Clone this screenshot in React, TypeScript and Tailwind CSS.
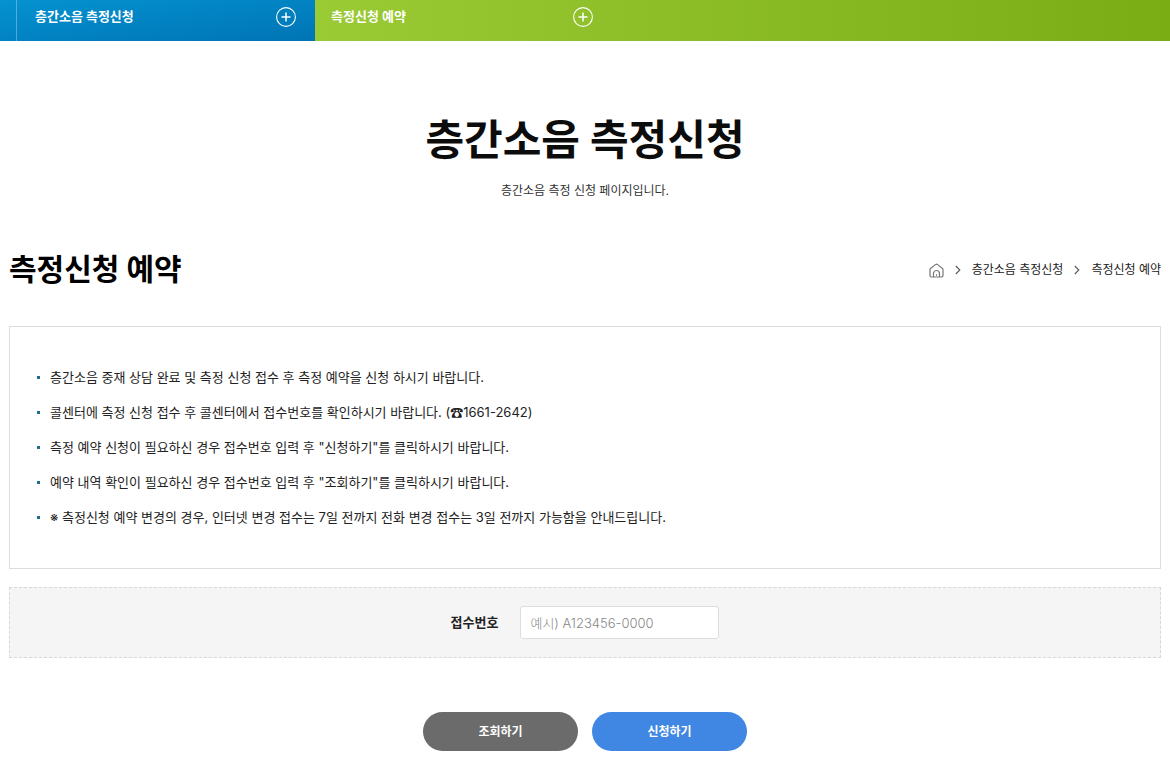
import { useState } from "react";
import type { FormEvent } from "react";

const notices = [
    "층간소음 중재 상담 완료 및 측정 신청 접수 후 측정 예약을 신청 하시기 바랍니다.",
    "콜센터에 측정 신청 접수 후 콜센터에서 접수번호를 확인하시기 바랍니다. (☎1661-2642)",
    "측정 예약 신청이 필요하신 경우 접수번호 입력 후 \"신청하기\"를 클릭하시기 바랍니다.",
    "예약 내역 확인이 필요하신 경우 접수번호 입력 후 \"조회하기\"를 클릭하시기 바랍니다.",
    "※ 측정신청 예약 변경의 경우, 인터넷 변경 접수는 7일 전까지 전화 변경 접수는 3일 전까지 가능함을 안내드립니다.",
];

function PlusCircle() {
    return (
        <svg width="20" height="20" viewBox="0 0 20 20" fill="none" stroke="currentColor" aria-hidden="true">
            <circle cx="10" cy="10" r="9.4" strokeWidth="1.1" />
            <path d="M10 5.5v9M5.5 10h9" strokeWidth="1.5" />
        </svg>
    );
}

function HomeIcon() {
    return (
        <svg width="15" height="15" viewBox="0 0 15 15" fill="none" stroke="#777" strokeWidth="1.2" strokeLinejoin="round" aria-hidden="true">
            <path d="M1 6.6q0-.7.5-1.1l5.2-4.1q.8-.6 1.6 0l5.200 4.100q.5.4.5 1.100v6q0 1.400-1.400 1.400H2.400Q1 14 1 12.600z" />
            <path d="M4.500 14v-3.500a3 3 0 0 1 6 0V14" />
            <path d="M7.500 11v2" strokeWidth=".8" />
        </svg>
    );
}

function Chevron() {
    return (
        <svg width="6" height="10" viewBox="0 0 6 10" fill="none" stroke="#555" strokeWidth="1.1" aria-hidden="true">
            <path d="M.8 1l4 4-4 4" />
        </svg>
    );
}

function TopNav() {
    return (
        <nav className="flex text-[13px] font-bold text-white">
            <div className="flex w-[315px] shrink-0 bg-linear-to-br from-[#0592d0] to-[#0074b5] pl-4">
                <button type="button" className="flex flex-1 items-center justify-between border-l border-white/30 pt-[7px] pr-[19px] pb-[14px] pl-[18px]">
                    층간소음 측정신청
                    <PlusCircle />
                </button>
            </div>
            <div className="flex-1 bg-linear-to-r from-[#9aca34] to-[#7aad14]">
                <button type="button" className="flex w-[297px] items-center justify-between pt-[7px] pr-[19px] pb-[14px] pl-4">
                    측정신청 예약
                    <PlusCircle />
                </button>
            </div>
        </nav>
    );
}

function Breadcrumb() {
    return (
        <nav aria-label="breadcrumb" className="flex items-center gap-[11px] pt-[2px] text-xs text-[#222]">
            <a href="#" aria-label="홈">
                <HomeIcon />
            </a>
            <Chevron />
            <a href="#">층간소음 측정신청</a>
            <Chevron />
            <a href="#">측정신청 예약</a>
        </nav>
    );
}

export default function App() {
    const [receiptNo, setReceiptNo] = useState("");

    const handleSubmit = (e: FormEvent) => {
        e.preventDefault();
    };

    return (
        <div className="bg-white font-['Inter','Noto_Sans_CJK_KR',sans-serif] text-[#222]">
            <TopNav />

            <main className="px-[9px] pb-[9px]">
                <header className="pt-[69px] text-center">
                    <h1 className="text-[42px] leading-[60px] font-bold text-[#0c0c0c]">층간소음 측정신청</h1>
                    <p className="mt-3 text-xs leading-[18px] text-[#333]">층간소음 측정 신청 페이지입니다.</p>
                </header>

                <div className="mt-[49px] flex items-center justify-between">
                    <h2 className="text-[30px] leading-10 font-bold text-black">측정신청 예약</h2>
                    <Breadcrumb />
                </div>

                <ul className="mt-[37px] border border-[#ddd] px-[27px] py-[33px] text-[13px] leading-[35px]">
                    {notices.map((text) => (
                        <li key={text} className="flex items-center gap-[10px]">
                            <span className="size-[3px] shrink-0 bg-[#1c6f8c]" />
                            {text}
                        </li>
                    ))}
                </ul>

                <form onSubmit={handleSubmit}>
                    <div className="mt-[18px] flex items-center justify-center gap-[22px] border border-dashed border-[#d8d8d8] bg-[#f5f5f5] py-[18px]">
                        <label htmlFor="receiptNo" className="text-[13px] font-bold">
                            접수번호
                        </label>
                        <input
                            id="receiptNo"
                            type="text"
                            value={receiptNo}
                            onChange={(e) => setReceiptNo(e.target.value)}
                            placeholder="예시) A123456-0000"
                            className="h-[33px] w-[199px] rounded-[3px] border border-[#ddd] bg-white px-[9px] text-[13px] font-light placeholder:text-[#888]"
                        />
                    </div>

                    <div className="mt-[54px] flex justify-center gap-[14px] text-xs font-bold text-white">
                        <button type="button" className="h-[39px] w-[155px] rounded-full bg-[#6b6b6b]">
                            조회하기
                        </button>
                        <button type="submit" className="h-[39px] w-[155px] rounded-full bg-[#3f87e2]">
                            신청하기
                        </button>
                    </div>
                </form>
            </main>
        </div>
    );
}
